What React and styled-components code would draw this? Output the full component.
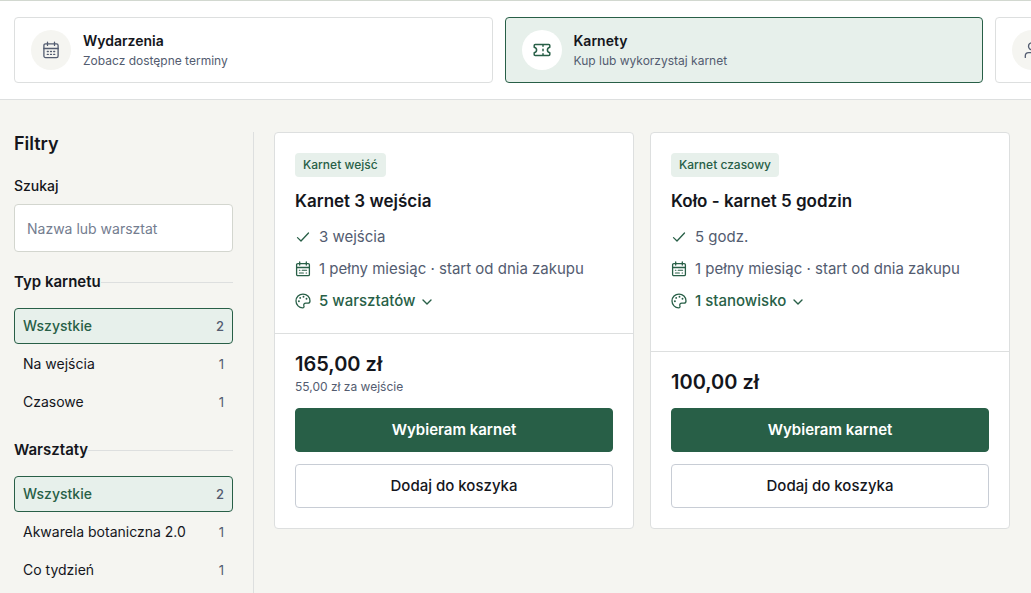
import React, { useState } from "react";
import styled, { createGlobalStyle } from "styled-components";

const GlobalStyle = createGlobalStyle`
  :root {
    --ink: #14161c;
    --muted: #535c70;
    --green: #285f47;
    --mint: #e7f0eb;
    --paper: #f5f5f1;
    --line: #dddfdf;
  }

  * {
    box-sizing: border-box;
  }

  body {
    margin: 0;
    background: var(--paper);
    color: var(--ink);
    font-family: "Inter", sans-serif;
    font-size: 14px;
    line-height: 20px;
  }

  button,
  input {
    font: inherit;
    color: inherit;
  }
`;

const Page = styled.div`
  display: flex;
  flex-direction: column;
  min-height: 100vh;
`;

const TabBar = styled.nav`
  display: flex;
  gap: 12px;
  padding: 16px 14px;
  overflow: hidden;
  background: white;
  border-top: 1px solid #d2d8d0;
  border-bottom: 1px solid var(--line);
`;

const TabLink = styled.a`
  display: flex;
  align-items: center;
  gap: 12px;
  flex: 0 0 calc(50% - 23px);
  padding: 12px 16px;
  border: 1px solid ${({ $active }) => ($active ? "var(--green)" : "var(--line)")};
  border-radius: 4px;
  background: ${({ $active }) => ($active ? "var(--mint)" : "white")};
  color: var(--ink);
  text-decoration: none;
`;

const TabIcon = styled.span`
  display: flex;
  align-items: center;
  justify-content: center;
  width: 40px;
  height: 40px;
  border-radius: 50%;
  background: ${({ $active }) => ($active ? "white" : "var(--paper)")};
  color: ${({ $active }) => ($active ? "var(--green)" : "var(--muted)")};
`;

const TabTitle = styled.strong`
  display: block;
  font-size: 14px;
  font-weight: 600;
  line-height: 22px;
`;

const TabHint = styled.span`
  display: block;
  color: var(--muted);
  font-size: 12px;
  line-height: 18px;
`;

const Main = styled.main`
  display: flex;
  flex: 1;
  gap: 20px;
  padding: 32px 21px 0 14px;
`;

const Sidebar = styled.aside`
  flex: 0 0 240px;
  padding-right: 20px;
  border-right: 1px solid var(--line);
`;

const SidebarTitle = styled.h2`
  margin: 0 0 20px;
  font-size: 18px;
  font-weight: 600;
  line-height: 24px;
`;

const SearchLabel = styled.label`
  display: block;
  margin-bottom: 8px;
  font-weight: 500;
`;

const SearchInput = styled.input`
  display: block;
  width: 100%;
  height: 48px;
  margin-bottom: 20px;
  padding: 0 12px;
  border: 1px solid #d3d6cf;
  border-radius: 4px;
  background: white;

  &::placeholder {
    color: #747d90;
    opacity: 1;
  }
`;

const FilterGroup = styled.fieldset`
  min-width: 0;
  margin: 0 0 20px;
  padding: 0;
  border: 0;
  border-top: 1px solid var(--line);

  &:last-child {
    margin-bottom: 0;
  }
`;

const FilterLegend = styled.legend`
  margin-bottom: 16px;
  padding: 0;
  font-size: 15px;
  font-weight: 600;
`;

const FilterList = styled.div`
  display: grid;
  gap: 2px;
`;

const FilterButton = styled.button`
  display: flex;
  align-items: center;
  justify-content: space-between;
  height: 36px;
  padding: 0 8px;
  border: 1px solid ${({ $active }) => ($active ? "var(--green)" : "transparent")};
  border-radius: 4px;
  background: ${({ $active }) => ($active ? "var(--mint)" : "transparent")};
  color: ${({ $active }) => ($active ? "var(--green)" : "var(--ink)")};
  font-weight: ${({ $active }) => ($active ? 500 : 400)};
  cursor: pointer;
`;

const FilterCount = styled.span`
  color: var(--muted);
  font-size: 13px;
`;

const PassGrid = styled.section`
  display: grid;
  flex: 1;
  align-self: flex-start;
  grid-template-columns: 1fr 1fr;
  gap: 16px;
`;

const PassCard = styled.article`
  display: flex;
  flex-direction: column;
  border: 1px solid var(--line);
  border-radius: 4px;
  background: white;
`;

const PassBody = styled.div`
  display: flex;
  flex: 1;
  flex-direction: column;
  align-items: flex-start;
  padding: 20px;
`;

const PassBadge = styled.span`
  padding: 2px 8px;
  border-radius: 4px;
  background: var(--mint);
  color: var(--green);
  font-size: 12px;
  font-weight: 500;
`;

const PassTitle = styled.h3`
  margin: 12px 0;
  font-size: 17px;
  font-weight: 600;
  line-height: 24px;
`;

const PassFeatures = styled.ul`
  display: grid;
  gap: 8px;
  margin: 0;
  padding: 0;
  list-style: none;
`;

const PassFeature = styled.li`
  display: flex;
  align-items: center;
  gap: 8px;
  color: var(--muted);
  font-size: 15px;
  line-height: 24px;

  > svg {
    color: var(--green);
  }
`;

const MoreButton = styled.button`
  display: flex;
  align-items: center;
  gap: 4px;
  padding: 0;
  border: 0;
  background: none;
  color: var(--green);
  font-weight: 500;
  cursor: pointer;
`;

const PassFooter = styled.div`
  padding: 16px 20px 20px;
  border-top: 1px solid var(--line);
`;

const PassPrice = styled.div`
  font-size: 20px;
  font-weight: 600;
  line-height: 28px;
`;

const PassUnitPrice = styled.div`
  color: var(--muted);
  font-size: 12px;
  line-height: 18px;
`;

const PassActions = styled.div`
  display: grid;
  gap: 12px;
  margin-top: 12px;
`;

const ActionButton = styled.button`
  height: 44px;
  border: 1px solid ${({ $primary }) => ($primary ? "var(--green)" : "#c8cdd5")};
  border-radius: 4px;
  background: ${({ $primary }) => ($primary ? "var(--green)" : "white")};
  color: ${({ $primary }) => ($primary ? "white" : "var(--ink)")};
  font-size: 15px;
  font-weight: ${({ $primary }) => ($primary ? 600 : 500)};
  cursor: pointer;
`;

function Icon({ size = 16, children }) {
  return (
    <svg
      width={size}
      height={size}
      viewBox={`0 0 ${size} ${size}`}
      fill="none"
      stroke="currentColor"
      strokeWidth="1.3"
      strokeLinecap="round"
      strokeLinejoin="round"
      aria-hidden="true"
    >
      {children}
    </svg>
  );
}

const CalendarDaysIcon = () => (
  <Icon size={18}>
    <rect x="1.9" y="2.8" width="14.2" height="13.8" rx="1.6" />
    <path d="M1.9 7.5h14.2M5.5 1.2v3.2M12.5 1.2v3.2" />
    <path d="M5.3 10.5h1M8.5 10.5h1M11.7 10.5h1M5.3 13.4h1M8.5 13.4h1M11.7 13.4h1" />
  </Icon>
);

const TicketIcon = () => (
  <Icon size={18}>
    <path
      d="M2.2 3.6h13.6c.6 0 1 .4 1 1v1.6c-1.5.4-2.4 1.400-2.400 2.800s.9 2.400 2.400 2.800v1.600c0 .6-.4 1-1 1H2.200c-.6 0-1-.4-1-1v-1.600c1.500-.4 2.400-1.400 2.400-2.800S2.700 6.600 1.200 6.200V4.600c0-.6.4-1 1-1Z"
      strokeWidth="1.5"
    />
    <path d="M10 4v1.300M10 8.300v1.400M10 12.700V14" strokeWidth="1.500" />
  </Icon>
);

const UserIcon = () => (
  <Icon size={18}>
    <circle cx="9" cy="5.300" r="3.500" />
    <path d="M2.300 16.400V15c0-1.900 1.500-3.400 3.400-3.400h6.600c1.900 0 3.400 1.500 3.400 3.400v1.400" />
  </Icon>
);

const CheckIcon = () => (
  <Icon>
    <path d="M2.500 8.600 6 12l7.500-8" />
  </Icon>
);

const CalendarNoteIcon = () => (
  <Icon>
    <rect x="1.600" y="2.600" width="12.800" height="12" rx="1.200" />
    <path d="M1.600 6.500h12.800M4.700 1v3M11.300 1v3" />
    <path d="M4.400 9.300h.5M7.200 9.300h4.400M4.400 12h4M11.100 12h.5" strokeWidth="1.100" />
  </Icon>
);

const PaletteIcon = () => (
  <Icon>
    <path d="M8 1.100c-3.900 0-7 3-7 6.900s3.100 6.900 6.600 6.900c1.200 0 1.700-1 1.300-2-.5-1.500.3-2.700 1.900-2.700h1.900c1.400 0 2.300-.9 2.300-2.300C15 4 11.900 1.100 8 1.100Z" />
    <g fill="currentColor" stroke="none">
      <circle cx="3.900" cy="8.200" r=".95" />
      <circle cx="5.200" cy="4.900" r=".95" />
      <circle cx="8.500" cy="3.800" r=".95" />
      <circle cx="11.500" cy="5.700" r=".95" />
    </g>
  </Icon>
);

const ChevronIcon = () => (
  <Icon>
    <path d="m4 7 4 4 4-4" strokeWidth="1.400" />
  </Icon>
);

const tabs = [
  { title: "Wydarzenia", hint: "Zobacz dostępne terminy", icon: <CalendarDaysIcon /> },
  { title: "Karnety", hint: "Kup lub wykorzystaj karnet", icon: <TicketIcon />, active: true },
  { title: "", hint: "", icon: <UserIcon /> },
];

const passTypes = [
  { name: "Wszystkie", count: 2 },
  { name: "Na wejścia", count: 1 },
  { name: "Czasowe", count: 1 },
];

const workshops = [
  { name: "Wszystkie", count: 2 },
  { name: "Akwarela botaniczna 2.0", count: 1 },
  { name: "Co tydzień", count: 1 },
];

const passes = [
  {
    badge: "Karnet wejść",
    title: "Karnet 3 wejścia",
    amount: "3 wejścia",
    scope: "5 warsztatów",
    price: "165,00 zł",
    unitPrice: "55,00 zł za wejście",
  },
  {
    badge: "Karnet czasowy",
    title: "Koło - karnet 5 godzin",
    amount: "5 godz.",
    scope: "1 stanowisko",
    price: "100,00 zł",
  },
];

function Filter({ legend, options }) {
  const [selected, setSelected] = useState(options[0].name);

  return (
    <FilterGroup>
      <FilterLegend>{legend}</FilterLegend>
      <FilterList>
        {options.map(({ name, count }) => (
          <FilterButton
            key={name}
            type="button"
            $active={name === selected}
            aria-pressed={name === selected}
            onClick={() => setSelected(name)}
          >
            {name}
            <FilterCount>{count}</FilterCount>
          </FilterButton>
        ))}
      </FilterList>
    </FilterGroup>
  );
}

function Pass({ pass }) {
  return (
    <PassCard>
      <PassBody>
        <PassBadge>{pass.badge}</PassBadge>
        <PassTitle>{pass.title}</PassTitle>
        <PassFeatures>
          <PassFeature>
            <CheckIcon />
            {pass.amount}
          </PassFeature>
          <PassFeature>
            <CalendarNoteIcon />
            1 pełny miesiąc · start od dnia zakupu
          </PassFeature>
          <PassFeature>
            <PaletteIcon />
            <MoreButton type="button">
              {pass.scope}
              <ChevronIcon />
            </MoreButton>
          </PassFeature>
        </PassFeatures>
      </PassBody>
      <PassFooter>
        <PassPrice>{pass.price}</PassPrice>
        {pass.unitPrice && <PassUnitPrice>{pass.unitPrice}</PassUnitPrice>}
        <PassActions>
          <ActionButton type="button" $primary>
            Wybieram karnet
          </ActionButton>
          <ActionButton type="button">Dodaj do koszyka</ActionButton>
        </PassActions>
      </PassFooter>
    </PassCard>
  );
}

function App() {
  return (
    <Page>
      <GlobalStyle />
      <TabBar>
        {tabs.map((tab, index) => (
          <TabLink key={index} href="#" $active={tab.active}>
            <TabIcon $active={tab.active}>{tab.icon}</TabIcon>
            <div>
              <TabTitle>{tab.title}</TabTitle>
              <TabHint>{tab.hint}</TabHint>
            </div>
          </TabLink>
        ))}
      </TabBar>

      <Main>
        <Sidebar>
          <SidebarTitle>Filtry</SidebarTitle>
          <SearchLabel htmlFor="search">Szukaj</SearchLabel>
          <SearchInput id="search" type="text" placeholder="Nazwa lub warsztat" />
          <Filter legend="Typ karnetu" options={passTypes} />
          <Filter legend="Warsztaty" options={workshops} />
        </Sidebar>

        <PassGrid>
          {passes.map((pass) => (
            <Pass key={pass.title} pass={pass} />
          ))}
        </PassGrid>
      </Main>
    </Page>
  );
}

export default App;
